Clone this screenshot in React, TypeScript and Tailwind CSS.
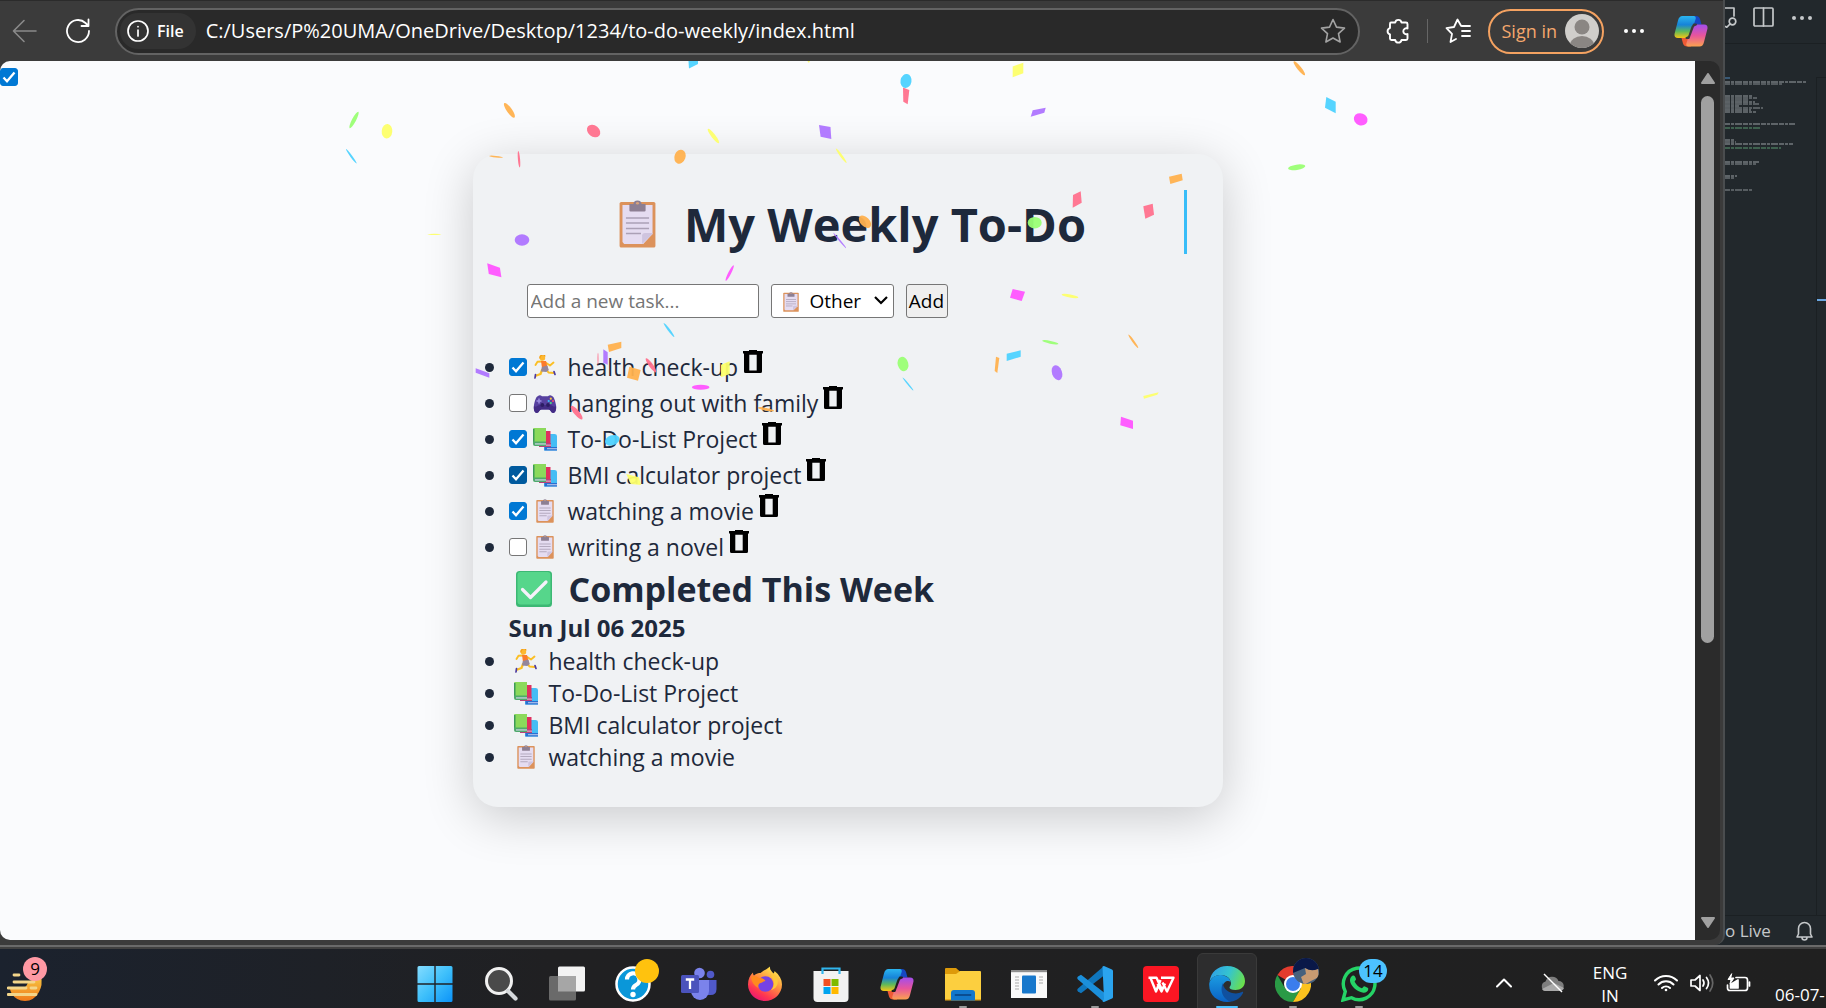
import React, { useState } from "react";

/* ---------- emoji style glyphs ---------- */

function Clipboard({ className }: { className: string }) {
  return (
    <svg viewBox="0 0 32 48" preserveAspectRatio="none" className={className} aria-hidden="true">
      <rect x="0.5" y="2" width="31" height="45.5" rx="1.5" fill="#dc925b" />
      <path d="M3 5h26v29l-8 10H4.5L3 42z" fill="#e5dcf1" />
      <path d="M20 44l9-10v-1h-6.500q-2.500 0-2.500 2.500z" fill="#cfc4df" />
      <path d="M9 4h3.500a3.500 3.500 0 0 1 7 0H23v6.500q0 1-1 1H10q-1 0-1-1z" fill="#8d7f93" />
      <circle cx="16" cy="3.200" r="1.300" fill="#d9a37b" />
      <path d="M6 18h20M6 23h20M6 28.500h20M6 33.500h13" stroke="#aba0b6" strokeWidth="1.600" />
    </svg>
  );
}

function Runner() {
  return (
    <svg viewBox="0 0 24 24" className="size-6" aria-hidden="true">
      <path d="M9 6.500 4.500 6.800 2.500 10" fill="none" stroke="#fbbf24" strokeWidth="1.900" strokeLinecap="round" strokeLinejoin="round" />
      <path d="M12.500 7.500 17 10.500 20.500 7.500" fill="none" stroke="#fbbf24" strokeWidth="1.900" strokeLinecap="round" strokeLinejoin="round" />
      <path d="M9 15 7.500 19 3.500 20.500" fill="none" stroke="#fbbf24" strokeWidth="2.200" strokeLinecap="round" strokeLinejoin="round" />
      <path d="M13 14 15.500 17.500 20.500 18" fill="none" stroke="#fbbf24" strokeWidth="2" strokeLinecap="round" strokeLinejoin="round" />
      <path d="M8 6h5l1.500 6-5.500 1z" fill="#fb7b2c" />
      <path d="M8.800 12l5.500-1.500 1.500 4.500-2.500 2L8 16.500z" fill="#94869c" />
      <circle cx="9.500" cy="3" r="2.700" fill="#fdb82f" />
      <path d="M7 3.500a2.800 2.800 0 0 1 5.200-2" fill="none" stroke="#f59e0b" strokeWidth="1.200" />
      <path d="M2.500 19.500 2 23M21 16.500 22 19.500" stroke="#4c3a9e" strokeWidth="1.700" strokeLinecap="round" />
    </svg>
  );
}

function Gamepad() {
  return (
    <svg viewBox="0 0 24 24" className="size-6" aria-hidden="true">
      <path d="M5 5q2-1.800 4 .2h6q2-2 4-.2c2 .6 3.200 5 4 9 .8 4-.3 8-2.800 8-2 0-2.700-3.500-4.700-3.500h-7C6.500 18.500 5.800 22 3.800 22 1.300 22 .2 18 1 14c.800-4 2-8.400 4-9z" fill="#56409f" />
      <path d="M1 15c2 2 3.500-1 6-1h10c2.500 0 4 3 6 1 .3 4-.8 7-2.800 7-2 0-2.700-3.500-4.700-3.500h-7C6.500 18.500 5.800 22 3.800 22 1.300 22 .6 18 1 15z" fill="#432c85" />
      <path d="M6 7.500v5M3.500 10h5" stroke="#9a8be0" strokeWidth="1.500" />
      <circle cx="9.300" cy="14" r="1.900" fill="#2c1d63" />
      <circle cx="15" cy="14" r="1.900" fill="#2c1d63" />
      <circle cx="17.800" cy="7.700" r="1.100" fill="#f8c33c" />
      <circle cx="20" cy="10" r="1.100" fill="#ef476f" />
      <circle cx="17.800" cy="12" r="1.100" fill="#4ade80" />
      <circle cx="15.700" cy="10" r="1.100" fill="#38bdf8" />
    </svg>
  );
}

function Books() {
  return (
    <svg viewBox="0 0 24 24" className="size-6" aria-hidden="true">
      <path d="M11 7h10.500q2.500 0 2.500 2v14.500H11z" fill="#45bdf5" />
      <path d="M11.500 20H24v3.500H11.500z" fill="#2a6fd0" />
      <path d="M14 21h10v1.300H14z" fill="#9fb8e8" />
      <path d="M6 4h11.500v16H6z" fill="#e0305f" />
      <path d="M6 16h12v4H6z" fill="#b8417a" />
      <path d="M8 17.500h10v1.300H8z" fill="#dba0c0" />
      <path d="M0 1.500Q0 1 1 1h12v15H0z" fill="#8bd95b" />
      <path d="M0 2h1.500v14H0z" fill="#3c9a58" />
      <path d="M0 14.500h13V19H2q-2 0-2-2z" fill="#4fa96b" />
      <path d="M2 16.300h11v1.300H2z" fill="#c5d3dd" />
    </svg>
  );
}

function Trash() {
  return (
    <svg viewBox="0 0 20 23" className="h-[23px] w-5" aria-hidden="true">
      <path fillRule="evenodd" d="M6 0h8v1h6v2.500h-1v18q0 1.500-1.500 1.500h-15Q1 23 1 21.500v-18H0V1h6zM6.300 4.800v15.700h7.400V4.800z" fill="#000" />
    </svg>
  );
}

const emoji = {
  run: <Runner />,
  game: <Gamepad />,
  books: <Books />,
  clip: (
    <span className="flex w-6 justify-center">
      <Clipboard className="h-6 w-[18px]" />
    </span>
  ),
};
type EmojiName = keyof typeof emoji;

/* ---------- confetti ---------- */

const C = { p: "#ff718d", y: "#fdff6a", b: "#4dd2ff", g: "#9aff74", o: "#ffb14e", v: "#ae74ff", m: "#ff54ff" };

const polys: [string, string][] = [
  [C.b, "688.5,61 698,61 698,64 689,68.5"],
  [C.p, "903,87.5 909.3,90 907.7,104.3 903.3,101.7"],
  [C.y, "1012.7,66.5 1023.3,62.7 1023.3,73.3 1012.7,77.3"],
  [C.v, "1032.7,110.3 1045.7,107.7 1044.3,112.7 1030.7,116.7"],
  [C.b, "1326.3,97 1335.7,101.7 1335.7,113.3 1325,107.7"],
  [C.o, "1169,176.7 1181.7,173.7 1182.7,180.3 1170.3,184"],
  [C.p, "1073,195 1080.7,191.3 1081.7,202.7 1072.7,207.7"],
  [C.p, "1143.3,206.3 1152.7,203.7 1154,214.7 1145.3,218.7"],
  [C.m, "1012.7,289 1025,291.7 1021.7,301 1010,297.7"],
  [C.o, "996,356.7 999.3,358 997.3,373 994.7,371"],
  [C.b, "1006.7,353.7 1020.7,350.3 1020.7,356.7 1006.7,361"],
  [C.y, "1143.3,396 1158.7,392.3 1157.3,394.7 1144,398.7"],
  [C.m, "1121,416.7 1133,420.7 1133,429 1120.3,425.3"],
  [C.v, "819,125 830.5,127 831.3,139 820.6,136.7"],
  [C.m, "487.2,263.3 499.9,267.7 501.4,277.3 488.8,274"],
  [C.o, "607.7,344.7 621.3,341.7 621.3,348 609,352"],
  [C.v, "603.3,349.3 607.7,352.3 607.7,364.7 603.3,362.7"],
  [C.o, "629.3,366.7 640.7,370 638,380.7 627,377.7"],
  [C.y, "721,364.7 729.7,361.3 729.7,374 721,377.3"],
  [C.v, "475.7,368.3 489.3,373.3 489.3,377.7 475.7,372.7"],
  [C.y, "626.3,474 639,477.3 641,485 630.7,484"],
];

const ovals: [string, number, number, number, number, number][] = [
  [C.y, 808.7, 61.5, 1, 1, 0],
  [C.b, 906, 81, 5.5, 7, 10],
  [C.o, 1299.3, 68.3, 8.8, 2, 51],
  [C.m, 1360.7, 119.3, 7, 6, 20],
  [C.g, 1296.7, 167.3, 8.7, 2.7, -8],
  [C.g, 1034.7, 222.7, 7, 5.8, 0],
  [C.y, 1070, 296, 8.5, 1.6, 10],
  [C.g, 1050.3, 342.3, 8.3, 1.4, 12],
  [C.o, 1133.3, 341.3, 8.3, 1.1, 54],
  [C.v, 1057, 372.7, 5, 7.7, -20],
  [C.g, 903, 364, 5.3, 7.3, -15],
  [C.b, 908, 384, 8.5, 0.7, 51],
  [C.g, 354, 120, 9.3, 2, -62],
  [C.y, 387, 131.3, 5.3, 7.3, 5],
  [C.b, 351.3, 156.3, 9, 1, 54],
  [C.o, 509.4, 110.3, 8.8, 2.6, 55],
  [C.p, 593.6, 131, 7.3, 5.6, 40],
  [C.y, 713.4, 136, 9, 2, 52],
  [C.y, 841.2, 155.7, 9, 1.2, 54],
  [C.o, 680, 156.7, 5.5, 7.2, 20],
  [C.o, 496, 156.7, 7, 0.8, 6],
  [C.p, 519, 159.3, 1.1, 8.3, -5],
  [C.y, 434.4, 234.3, 7, 0.6, 0],
  [C.v, 522, 240, 7.3, 5.8, 0],
  [C.o, 865, 221.7, 7.5, 4.5, 45],
  [C.v, 839.7, 240.5, 10, 0.7, 50],
  [C.m, 729.7, 273, 8.8, 1.4, -63],
  [C.b, 669, 330, 8.8, 1.1, 53],
  [C.p, 598, 358.7, 0.5, 6, 0],
  [C.p, 651, 365.3, 8.7, 2, 54],
  [C.m, 700.7, 387.3, 8.8, 2.5, 0],
  [C.p, 576.7, 412.7, 8.7, 2.6, 50],
  [C.o, 766, 409.3, 8.3, 1.4, 12],
  [C.b, 612.3, 440.3, 7.5, 5, -20],
];

function Confetti() {
  return (
    <svg className="pointer-events-none absolute inset-0 size-full" aria-hidden="true">
      <g transform="translate(0 -61)">
        {polys.map(([c, pts], i) => (
          <polygon key={i} fill={c} fillOpacity="0.95" points={pts} />
        ))}
        {ovals.map(([c, x, y, rx, ry, r], i) => (
          <ellipse key={i} fill={c} fillOpacity="0.95" rx={rx} ry={ry} transform={`translate(${x} ${y}) rotate(${r})`} />
        ))}
      </g>
    </svg>
  );
}

/* ---------- to-do page ---------- */

function Check({ label, initial, dark }: { label: string; initial: boolean; dark?: boolean }) {
  const [on, setOn] = useState(initial);
  return (
    <span className="grid size-[18px] shrink-0">
      <input
        type="checkbox"
        aria-label={label}
        checked={on}
        onChange={() => setOn(!on)}
        className={
          "col-start-1 row-start-1 size-[18px] appearance-none rounded-[3px] border border-[#767676] bg-white " +
          (dark ? "checked:border-[#005a9e] checked:bg-[#005a9e]" : "checked:border-[#0078d4] checked:bg-[#0078d4]")
        }
      />
      {on && (
        <svg viewBox="0 0 18 18" className="pointer-events-none col-start-1 row-start-1 size-[18px]" aria-hidden="true">
          <path d="M3.500 9.500l3.500 3.700 7.500-8.700" fill="none" stroke="#fff" strokeWidth="2.300" />
        </svg>
      )}
    </span>
  );
}

const Bullet = () => <span className="mr-[15px] size-[9px] shrink-0 rounded-full bg-[#1e293b]" />;

const tasks: { text: string; icon: EmojiName; done: boolean; dark?: boolean }[] = [
  { text: "health check-up", icon: "run", done: true },
  { text: "hanging out with family", icon: "game", done: false },
  { text: "To-Do-List Project", icon: "books", done: true },
  { text: "BMI calculator project", icon: "books", done: true, dark: true },
  { text: "watching a movie", icon: "clip", done: true },
  { text: "writing a novel", icon: "clip", done: false },
];

const completed: { text: string; icon: EmojiName }[] = [
  { text: "health check-up", icon: "run" },
  { text: "To-Do-List Project", icon: "books" },
  { text: "BMI calculator project", icon: "books" },
  { text: "watching a movie", icon: "clip" },
];

function TodoPage() {
  return (
    <main className="relative min-w-0 flex-1 overflow-hidden rounded-l-[10px] bg-[#fafbfd] pt-[7px] text-[#1e293b]">
      <Check label="Dark mode" initial={true} />
      <section className="mx-auto mt-[68px] w-[750px] rounded-[25px] bg-[#f0f2f4] px-9 pt-9 pb-[34px] shadow-[0_10px_50px_rgba(0,0,0,0.2)]">
        <h1 className="flex h-16 items-center justify-center gap-7 border-r-[3px] border-[#38bdf8] pt-1 pr-24 pl-[109px] text-[47px] leading-none font-bold whitespace-nowrap">
          <Clipboard className="h-12 w-[37px] shrink-0" />
          My Weekly To-Do
        </h1>
        <form className="mt-[30px] ml-[18px] flex h-[34px] gap-3 text-[19px] text-black" onSubmit={(e) => e.preventDefault()}>
          <input
            type="text"
            aria-label="New task"
            placeholder="Add a new task..."
            className="w-[232px] rounded-[3px] border border-[#767676] bg-white px-[3px] placeholder:text-[#757575]"
          />
          <span className="relative flex w-[123px]">
            <select aria-label="Category" className="w-full appearance-none rounded-[3px] border border-[#767676] bg-white pl-[38px]">
              <option>Other</option>
            </select>
            <Clipboard className="pointer-events-none absolute top-2 left-3 h-5 w-4" />
            <svg viewBox="0 0 14 9" className="pointer-events-none absolute top-3 right-[6px] h-[9px] w-[14px]" aria-hidden="true">
              <path d="M1 1l6 6 6-6" fill="none" stroke="#000" strokeWidth="2.200" />
            </svg>
          </span>
          <button type="submit" className="w-[42px] rounded-[3px] border border-[#767676] bg-[#efefef]">
            Add
          </button>
        </form>

        <ul className="mt-[31px] -ml-6 text-[23px] leading-9">
          {tasks.map((t) => (
            <li key={t.text} className="flex h-9 items-center whitespace-nowrap">
              <Bullet />
              <Check label={t.text} initial={t.done} dark={t.dark} />
              <span className="mr-[11px] ml-[6px]">{emoji[t.icon]}</span>
              <span>{t.text}</span>
              <button type="button" aria-label={"Delete " + t.text} className="mb-3 ml-[5px]">
                <Trash />
              </button>
            </li>
          ))}
        </ul>

        <h2 className="flex h-12 items-center gap-[17px] pl-[7px] text-[34px] leading-none font-bold whitespace-nowrap">
          <svg viewBox="0 0 36 36" className="size-9 shrink-0" aria-hidden="true">
            <rect width="36" height="36" rx="3.500" fill="#3cb874" />
            <rect x="1.500" y="1" width="33" height="32.500" rx="3" fill="#56d68b" />
            <path d="M6.500 18.500l8 8L30 11" fill="none" stroke="#f6f1fb" strokeWidth="3.200" strokeLinecap="round" strokeLinejoin="round" />
          </svg>
          Completed This Week
        </h2>
        <h3 className="text-[24px] leading-[30px] font-bold">Sun Jul 06 2025</h3>
        <ul className="mt-[2px] -ml-6 text-[23px] leading-8">
          {completed.map((t) => (
            <li key={t.text} className="flex h-8 items-center whitespace-nowrap">
              <Bullet />
              <span className="mr-[11px] ml-[5px]">{emoji[t.icon]}</span>
              {t.text}
            </li>
          ))}
        </ul>
      </section>
      <Confetti />
    </main>
  );
}

/* ---------- browser chrome ---------- */

const iconBase = { fill: "none", stroke: "currentColor", strokeLinecap: "round", strokeLinejoin: "round" } as const;

function CopilotIcon({ className, id, gap }: { className: string; id: string; gap: string }) {
  return (
    <svg viewBox="0 0 34 31" className={className} aria-hidden="true">
      <defs>
        <linearGradient id={id + "a"} x1="0" y1="0" x2="0" y2="1">
          <stop offset="0" stopColor="#2bb5f0" />
          <stop offset="0.4" stopColor="#1683d8" />
          <stop offset="0.7" stopColor="#5fb85a" />
          <stop offset="1" stopColor="#f6c614" />
        </linearGradient>
        <linearGradient id={id + "b"} x1="0" y1="0" x2="0" y2="1">
          <stop offset="0" stopColor="#a24dee" />
          <stop offset="0.5" stopColor="#e8559c" />
          <stop offset="1" stopColor="#fba24f" />
        </linearGradient>
      </defs>
      <path d="M17 0h5q3 0 4 3l1.500 5.500H23q-3 0-4 3z" fill="#1547c4" />
      <path d="M17 30.500h-4q-3 0-4-3L7.500 22H12q3 0 4-3z" fill="#ee5a35" />
      <path d="M8.500 0H20q2.500.5 1.500 3.500l-5 15Q15.500 22 12 22H4Q0 22 .5 18L4 4.500Q5 0 8.500 0z" fill={`url(#${id}a)`} />
      <path d="M25.500 30.500H14q-2.500-.5-1.500-3.500l5-15Q18.500 8.500 22 8.500h8q4 0 3.500 4L30 26q-1 4.500-4.500 4.500z" fill={`url(#${id}b)`} />
      <path d="M19.800 8.500H22q-3 .5-4 3.500l-3.300 10H12.500q2.500-.5 3.500-3.500z" fill={gap} stroke={gap} strokeWidth="2" strokeLinejoin="round" />
    </svg>
  );
}

function Toolbar() {
  return (
    <header className="flex h-[61px] shrink-0 items-center border-t border-[#2b2b2b] bg-[#3b3b3b] pr-[15px] pl-3 text-white">
      <button type="button" aria-label="Back" className="text-[#8a8a8a]">
        <svg viewBox="0 0 25 24" className="h-6 w-[25px]" {...iconBase} strokeWidth="1.600">
          <path d="M24 12H1.500M12 1.500L1.500 12 12 22.500" />
        </svg>
      </button>
      <button type="button" aria-label="Refresh" className="ml-7">
        <svg viewBox="0 0 26 26" className="size-[26px]" {...iconBase} strokeWidth="1.800">
          <path d="M24 13A11 11 0 1 1 20.500 5L23 7.500M23.500 1.500v6.500h-7" />
        </svg>
      </button>
      <div className="ml-6 flex h-[47px] min-w-0 flex-1 items-center rounded-full border-2 border-[#636363] bg-[#292929] pr-3 pl-[3px]">
        <button type="button" className="flex h-9 shrink-0 items-center gap-2 rounded-full bg-[#333333] pr-3 pl-[7px] text-[16px] font-semibold">
          <svg viewBox="0 0 22 22" className="size-[22px]" {...iconBase} strokeWidth="1.700">
            <circle cx="11" cy="11" r="10" />
            <path d="M11 10v6M11 6.500v.2" />
          </svg>
          File
        </button>
        <input
          aria-label="Address"
          readOnly
          value="C:/Users/P%20UMA/OneDrive/Desktop/1234/to-do-weekly/index.html"
          className="ml-[10px] min-w-0 flex-1 bg-transparent text-[20px] text-white outline-none"
        />
        <button type="button" aria-label="Add to favorites" className="text-[#a3a3a3]">
          <svg viewBox="0 0 26 26" className="size-[26px]" {...iconBase} strokeWidth="1.600">
            <path d="M13 1.500l3.500 7.600 8 1-6 5.600 1.600 8.300L13 20l-7.100 4 1.600-8.300-6-5.600 8-1z" />
          </svg>
        </button>
      </div>
      <button type="button" aria-label="Extensions" className="ml-[26px]">
        <svg viewBox="0 0 24 26" className="h-[26px] w-6" {...iconBase} strokeWidth="1.900">
          <path d="M5 4.500h4.200a3.200 3.200 0 0 1 6.300 0H20q1.500 0 1.500 1.500v4.500a3 3 0 1 0 0 5.500v4.500q0 1.500-1.500 1.500h-4.500a3.200 3.200 0 0 1-6.300 0H5.500Q4 22 4 20.500V16.300a3.200 3.200 0 0 1 0-6.200V6q0-1.500 1-1.500z" />
        </svg>
      </button>
      <span className="ml-[17px] h-6 w-px bg-[#666]" />
      <button type="button" aria-label="Favorites" className="ml-[17px]">
        <svg viewBox="0 0 26 26" className="size-[26px]" {...iconBase} strokeWidth="1.800">
          <path d="M17 8l-1-.2-3.500-6.300L9 9l-7.500 1.200 5.500 5.600L5.500 24l5.500-3M17 8h8M17 13h8M17 18h8" />
        </svg>
      </button>
      <button type="button" className="ml-[17px] flex h-[45px] items-center gap-2 rounded-full border-2 border-[#f4a261] pr-[3px] pl-3 text-[18px] whitespace-nowrap text-[#f4a76d]">
        Sign in
        <svg viewBox="0 0 34 34" className="size-[34px]" aria-hidden="true">
          <defs>
            <clipPath id="avatar">
              <circle cx="17" cy="17" r="17" />
            </clipPath>
          </defs>
          <g clipPath="url(#avatar)">
            <rect width="34" height="34" fill="#d0cecb" />
            <circle cx="17" cy="13" r="7.500" fill="#8a8683" />
            <ellipse cx="17" cy="31" rx="12" ry="9" fill="#8a8683" />
          </g>
        </svg>
      </button>
      <button type="button" aria-label="More" className="mr-[30px] ml-5 flex gap-1">
        <span className="size-1 rounded-full bg-white" />
        <span className="size-1 rounded-full bg-white" />
        <span className="size-1 rounded-full bg-white" />
      </button>
      <button type="button" aria-label="Copilot">
        <CopilotIcon id="top" gap="#3b3b3b" className="h-[31px] w-[34px]" />
      </button>
    </header>
  );
}

function Scrollbar() {
  return (
    <div className="flex w-[25px] shrink-0 flex-col items-center rounded-r-[10px] bg-[#2b2b2b] py-3">
      <svg viewBox="0 0 14 11" className="h-[11px] w-[14px]" aria-hidden="true">
        <path d="M7 1l6 9H1z" fill="#a0a0a0" stroke="#a0a0a0" strokeWidth="2" strokeLinejoin="round" />
      </svg>
      <div className="mt-3 h-[64%] w-[13px] rounded-full bg-[#a0a0a0]" />
      <svg viewBox="0 0 14 11" className="mt-auto h-[11px] w-[14px]" aria-hidden="true">
        <path d="M7 10L1 1h12z" fill="#a0a0a0" stroke="#a0a0a0" strokeWidth="2" strokeLinejoin="round" />
      </svg>
    </div>
  );
}

/* ---------- editor strip behind the browser ---------- */

const mini: [number, number, string][] = [
  [78, 5, "#4b7ba8"], [82, 82, "#9aa0a4"], [84, 57, "#868c90"],
  [96, 28, "#969ca0"], [98, 32, "#8b9195"], [100, 24, "#8b9195"], [102, 30, "#969ca0"], [104, 34, "#8b9195"], [106, 14, "#969ca0"], [108, 38, "#8b9195"], [110, 26, "#969ca0"], [112, 31, "#969ca0"],
  [124, 70, "#9aa0a4"], [128, 36, "#5d9a72"],
  [140, 10, "#969ca0"], [142, 11, "#8b9195"], [144, 68, "#9aa0a4"], [148, 56, "#5d9a72"],
  [162, 34, "#9aa0a4"], [164, 31, "#8b9195"],
  [176, 12, "#9aa0a4"], [178, 10, "#8b9195"], [190, 27, "#8b9195"],
];

function EditorStrip() {
  return (
    <aside className="flex w-[101px] shrink-0 flex-col bg-[#22282c] text-[#c5c8ca]">
      <div className="flex h-11 shrink-0 items-start border-b border-[#1b2023] pt-[7px]">
        <svg viewBox="0 0 12 21" className="h-[21px] w-3" {...iconBase} strokeWidth="1.700">
          <path d="M0 1h9v8M0 19.500h1" />
          <circle cx="7.500" cy="14.500" r="3.300" />
          <path d="M5 17l-3.500 3.500" />
        </svg>
        <svg viewBox="0 0 21 20" className="ml-4 h-5 w-[21px]" {...iconBase} strokeWidth="1.700">
          <rect x="1" y="1" width="19" height="18" rx="1" />
          <path d="M10.500 1v18" />
        </svg>
        <div className="mt-[9px] ml-[18px] flex gap-1">
          <span className="size-1 rounded-full bg-[#c5c8ca]" />
          <span className="size-1 rounded-full bg-[#c5c8ca]" />
          <span className="size-1 rounded-full bg-[#c5c8ca]" />
        </div>
      </div>
      <div className="flex min-h-0 flex-1">
        <svg className="h-full w-[91px]" aria-hidden="true">
          {mini.map(([y, w, c]) => (
            <path key={y} d={`M0 ${y - 44}h${w}`} stroke={c} strokeWidth="1.200" strokeDasharray="5 1 3 1 7 1" />
          ))}
        </svg>
        <div className="mt-[33px] flex-1 border-t border-l border-[#1b2023] pt-[221px]">
          <div className="h-[2px] bg-[#6aa6e0]" />
        </div>
      </div>
      <div className="flex h-[30px] shrink-0 items-center border-t border-[#1b2023] text-[17px]">
        <span>o Live</span>
        <svg viewBox="0 0 17 20" className="ml-[25px] h-5 w-[17px]" {...iconBase} strokeWidth="1.600">
          <path d="M1 16l1.500-3V7.500a6 6 0 0 1 12 0V13l1.500 3zM6 16.500a2.500 2.500 0 0 0 5 0" />
        </svg>
      </div>
    </aside>
  );
}

/* ---------- taskbar ---------- */

function StartIcon() {
  return (
    <svg viewBox="0 0 36 36" className="size-9">
      <defs>
        <linearGradient id="win" x1="0" y1="0" x2="1" y2="1">
          <stop offset="0" stopColor="#84dcff" />
          <stop offset="0.5" stopColor="#3fc0fb" />
          <stop offset="1" stopColor="#0b93f8" />
        </linearGradient>
      </defs>
      <path d="M2 0h15.300v17.300H.500V1.500Q.500 0 2 0zM18.700 0H34q1.500 0 1.500 1.500v15.800H18.700zM.500 18.700h16.800V36H2q-1.500 0-1.500-1.500zM18.700 18.700h16.800v15.800q0 1.500-1.500 1.500H18.700z" fill="url(#win)" />
    </svg>
  );
}

function SearchIcon() {
  return (
    <svg viewBox="0 0 36 36" className="size-9">
      <circle cx="16" cy="15" r="12.500" fill="#4a4a4a" stroke="#f1f1f1" strokeWidth="3" />
      <path d="M25 25l7.500 7.500" stroke="#d6d9dc" strokeWidth="4.200" strokeLinecap="round" />
    </svg>
  );
}

function TaskViewIcon() {
  return (
    <svg viewBox="0 0 36 36" className="size-9">
      <rect x="9" y="0.500" width="27" height="25" rx="1.500" fill="#f3f3f3" />
      <rect x="0" y="10" width="27" height="24.500" rx="1.500" fill="#6a6a6a" />
      <rect x="9" y="10" width="18" height="15.500" fill="#a6a6a6" />
    </svg>
  );
}

function HelpIcon() {
  return (
    <span className="relative block">
      <svg viewBox="0 0 36 36" className="size-9">
        <circle cx="18" cy="18" r="16.500" fill="#0a97d9" stroke="#fff" strokeWidth="2.500" />
        <path d="M12 13.500a6.200 6.200 0 1 1 9 5.500c-2 1.200-3 2-3 4.500" fill="none" stroke="#fff" strokeWidth="4.200" />
        <circle cx="18" cy="28.500" r="2.700" fill="#fff" />
      </svg>
      <span className="absolute -top-[7px] left-5 size-6 rounded-full bg-[#ffc20e]" />
    </span>
  );
}

function TeamsIcon() {
  return (
    <svg viewBox="0 0 36 36" className="size-9">
      <circle cx="18.500" cy="7" r="5.300" fill="#7b83eb" />
      <circle cx="29.500" cy="8.500" r="3.800" fill="#5059c9" />
      <path d="M24 14h11.500v9q0 6-6 6H24z" fill="#5059c9" />
      <path d="M10 14h18v11a9 9 0 0 1-18 0z" fill="#7b83eb" />
      <rect x="0" y="9" width="18" height="18" rx="1.500" fill="#4b53bc" />
      <path d="M4.800 13.500h8.400M9 13.500V23" stroke="#fff" strokeWidth="2.300" />
    </svg>
  );
}

function FirefoxIcon() {
  return (
    <svg viewBox="0 0 36 36" className="size-9">
      <defs>
        <linearGradient id="ffx" x1="0.8" y1="0" x2="0.2" y2="1">
          <stop offset="0" stopColor="#fff44f" />
          <stop offset="0.4" stopColor="#ff9640" />
          <stop offset="0.75" stopColor="#ff3750" />
          <stop offset="1" stopColor="#e4107a" />
        </linearGradient>
      </defs>
      <path d="M23 .5c-.5 3 1.500 4.500 3.500 7 .800-.8 1-2 1-2.500C32.500 9 35 13.500 35 18.500a17 16.500 0 0 1-34 0C1 13 3 9 6 6.500c0 1.500.3 2.300 1 3C9 7.500 12 7 13.500 7 16 4.500 20 3.500 23 .5z" fill="url(#ffx)" />
      <circle cx="18.500" cy="18" r="7.800" fill="#7542e5" />
      <path d="M4 11c3-2 6-1 8 1 2.500-.5 5 .5 6.500 3-2 .2-3 1.500-5 2-2 .800-2.500 2.500-2 5-4-2-7-6-7.500-11z" fill="#ff8a1e" />
      <path d="M24 10.500c4 3 4 10 0 13.500 5-1 8-6 6.500-11-1-3-3.500-5-6-6 .5 1.500 0 2.500-.5 3.500z" fill="#ffc83a" />
    </svg>
  );
}

function StoreIcon() {
  return (
    <svg viewBox="0 0 36 36" className="size-9">
      <path d="M.5 5h35v27q0 4-4 4h-27q-4 0-4-4z" fill="#f2f2f2" />
      <path d="M9.500 8V2.500h17V8" fill="none" stroke="#30b6ee" strokeWidth="2.200" />
      <rect x="10.500" y="13" width="7" height="7" fill="#f25022" />
      <rect x="18.500" y="13" width="7" height="7" fill="#7fba00" />
      <rect x="10.500" y="21" width="7" height="7" fill="#00a4ef" />
      <rect x="18.500" y="21" width="7" height="7" fill="#ffb900" />
    </svg>
  );
}

function FolderIcon() {
  return (
    <svg viewBox="0 0 36 36" className="size-9">
      <path d="M0 3q0-1 1-1h10l4 3.500L12 8H0z" fill="#dd9a0a" />
      <path d="M0 8h11l4-3h20q1 0 1 1v28H0z" fill="#fccf3f" />
      <path d="M0 33h36v1.500H0z" fill="#e8a91c" />
      <path d="M6 34.500V27q0-3 3-3h18q3 0 3 3v7.500z" fill="#1277cc" />
      <path d="M10.500 29h15" stroke="#0a4d91" strokeWidth="1.800" strokeLinecap="round" />
    </svg>
  );
}

function WindowIcon() {
  return (
    <svg viewBox="0 0 36 36" className="size-9">
      <rect x="0" y="4" width="36" height="28" fill="#fafafa" />
      <rect x="0" y="4" width="36" height="2.200" fill="#8f8f8f" />
      <path d="M4 11h4M4 14h4M4 17h4M4 20h4M4 23h4M28 11h4M28 14h4M28 17h4" stroke="#d2d2d2" strokeWidth="1.800" />
      <rect x="11" y="9.500" width="14" height="18" rx="1" fill="#1878cc" />
    </svg>
  );
}

function CodeIcon() {
  return (
    <svg viewBox="0 0 36 36" className="size-9">
      <path d="M27 0v9.500L4 27.300 1 25.500q-1.500-1.500 0-3z" fill="#0f76bd" />
      <path d="M27 36v-9.500L4 8.700 1 10.500q-1.500 1.500 0 3z" fill="#1b8fdb" />
      <path d="M25.500.5 27 0l8 3.500q1 .500 1 1.500v26q0 1-1 1.500L27 36l-1.500-.5L27 33z" fill="#2ba4ee" />
    </svg>
  );
}

function WpsIcon() {
  return (
    <svg viewBox="0 0 36 36" className="size-9">
      <rect width="36" height="36" rx="4" fill="#fb1623" />
      <path d="M5.500 11.800H13.500l5 11M7.500 12l5.500 13.500L17.500 14M18 11.800h12.500L24 25.500l-4.500-9M14.500 18l4 7.500 3.500-8" fill="none" stroke="#fff" strokeWidth="2.400" strokeLinejoin="round" />
    </svg>
  );
}

function EdgeIcon() {
  return (
    <svg viewBox="0 0 36 36" className="size-9">
      <defs>
        <linearGradient id="edgeTop" x1="0" y1="0.3" x2="1" y2="0.6">
          <stop offset="0" stopColor="#2f9fe8" />
          <stop offset="0.5" stopColor="#35c4cf" />
          <stop offset="1" stopColor="#6be04a" />
        </linearGradient>
        <linearGradient id="edgeLow" x1="0" y1="0" x2="0" y2="1">
          <stop offset="0" stopColor="#1b9de2" />
          <stop offset="1" stopColor="#0a61c4" />
        </linearGradient>
      </defs>
      <path d="M.5 16C1.500 6 9 0 18 0c11 0 18 7.500 18 15 0 6-4.500 9-9.500 9-4 0-6-1-6-2.500 0-1 1.500-1.500 1.500-4C22 13 18 9 12 9 6 9 2 12 .5 16z" fill="url(#edgeTop)" />
      <path d="M.300 17C2 11.500 7 8.500 12 9c6 .5 9.500 4 9.500 7-2-2-7-1-8 5-.800 6 3 13 9 14.500C11 38-1 30 .300 17z" fill="url(#edgeLow)" />
      <path d="M14 17c-4 8 1 18 9 18.500 5-1 9-4.500 11-8.500.5-1-.3-1.500-1-1-6 3-15 1-18-5-.800-1.500-1-3-1-4z" fill="#10509f" />
    </svg>
  );
}

function ChromeIcon() {
  return (
    <span className="relative block">
      <svg viewBox="0 0 36 36" className="size-9">
        <path d="M18 18L2.400 9A18 18 0 0 1 33.600 9H18z" fill="#e33b2e" />
        <path d="M18 18l7.800 4.500L18 36A18 18 0 0 1 2.400 9l7.800 13.500z" fill="#2a9a46" />
        <path d="M33.600 9A18 18 0 0 1 18 36l7.800-13.500V9z" fill="#fcc31e" />
        <circle cx="18" cy="18" r="9" fill="#fff" />
        <circle cx="18" cy="18" r="7" fill="#3b7ded" />
      </svg>
      <svg viewBox="0 0 26 26" className="absolute -top-2 left-[18px] size-[26px]">
        <defs>
          <clipPath id="profile">
            <circle cx="13" cy="13" r="13" />
          </clipPath>
        </defs>
        <g clipPath="url(#profile)">
          <rect width="26" height="26" fill="#46617d" />
          <path d="M0 0h26v11q-8 4-14-1L0 15z" fill="#0a1848" />
          <path d="M12 10q6 4 13 1l1 8-8 4-7 4-3-8 5-3z" fill="#c89b72" />
        </g>
      </svg>
    </span>
  );
}

function WhatsAppIcon() {
  return (
    <span className="relative block">
      <svg viewBox="0 0 36 36" className="size-9">
        <path d="M2 34l2.300-8.500A15.800 15.800 0 1 1 10.500 31.700z" fill="none" stroke="#25d366" strokeWidth="3.400" />
        <path d="M12.500 9.500c1 0 1.500.5 2.500 3.500.3 1-1.500 2-1.300 2.700 1.300 3 4 5.300 7 6.500.8 0 1.800-2 2.600-2 3.700 1.500 4.200 2 4 2.800-.3 3-3 4-5 3.700C15 25.500 10 20 9 15c-.2-3 1.500-5.500 3.500-5.500z" fill="#25d366" />
      </svg>
      <span className="absolute -top-[7px] left-[18px] flex h-6 w-7 items-center justify-center rounded-full bg-[#4cc2ff] text-[17px] text-black">14</span>
    </span>
  );
}

const apps: { name: string; icon: React.ReactNode; state?: "open" | "active" }[] = [
  { name: "Start", icon: <StartIcon /> },
  { name: "Search", icon: <SearchIcon /> },
  { name: "Task view", icon: <TaskViewIcon /> },
  { name: "Get Help", icon: <HelpIcon /> },
  { name: "Teams", icon: <TeamsIcon /> },
  { name: "Firefox", icon: <FirefoxIcon /> },
  { name: "Store", icon: <StoreIcon /> },
  { name: "Copilot", icon: <CopilotIcon id="bar" gap="#202020" className="h-[31px] w-[34px]" /> },
  { name: "Files", icon: <FolderIcon />, state: "open" },
  { name: "Window", icon: <WindowIcon /> },
  { name: "Code", icon: <CodeIcon />, state: "open" },
  { name: "Office", icon: <WpsIcon /> },
  { name: "Edge", icon: <EdgeIcon />, state: "active" },
  { name: "Chrome", icon: <ChromeIcon />, state: "open" },
  { name: "WhatsApp", icon: <WhatsAppIcon />, state: "open" },
];

function Taskbar() {
  return (
    <footer className="flex h-[59px] shrink-0 items-stretch overflow-hidden bg-linear-to-r from-[#1b222e] via-[#202022] via-30% to-[#202020] text-white">
      <button type="button" aria-label="Weather" className="relative ml-[7px] h-[59px] w-[42px] shrink-0">
        <svg viewBox="0 0 36 34" className="mt-3 h-[34px] w-9" aria-hidden="true">
          <defs>
            <linearGradient id="sun" x1="0" y1="0" x2="0" y2="1">
              <stop offset="0" stopColor="#f7c844" />
              <stop offset="1" stopColor="#f07a1a" />
            </linearGradient>
          </defs>
          <path d="M34 8q2 9-2 16-5 9-14 9-9-.5-13-7-2-3-2-6h13q4-1 5-6z" fill="url(#sun)" />
          <path d="M7 7h5M7 14h20M1 20h18M24 20h5M1 26.500h28" stroke="#f3d58a" strokeWidth="2.800" strokeLinecap="round" />
        </svg>
        <span className="absolute top-2 left-4 flex size-6 items-center justify-center rounded-full bg-[#ff99a4] text-[17px] text-black">9</span>
      </button>
      <nav aria-label="Apps" className="ml-[353px] flex shrink-0">
        {apps.map((a) => (
          <button
            key={a.name}
            type="button"
            aria-label={a.name}
            className={
              "relative mt-1 flex h-[62px] w-[66px] items-center justify-center " +
              (a.state === "active" ? "before:absolute before:inset-x-[3px] before:inset-y-0 before:rounded-md before:border before:border-[#3a3a3a] before:bg-[#2d2d2e]" : "")
            }
          >
            <span className="relative">{a.icon}</span>
            {a.state === "open" && <span className="absolute top-[53px] h-[2px] w-2 rounded-full bg-[#9a9a9a]" />}
            {a.state === "active" && <span className="absolute top-[53px] h-[2px] w-[22px] rounded-full bg-[#4cc2ff]" />}
          </button>
        ))}
      </nav>
      <div className="ml-auto flex shrink-0 items-center pt-2 text-[17px]">
        <button type="button" aria-label="Hidden icons">
          <svg viewBox="0 0 16 10" className="h-[10px] w-4" {...iconBase} strokeWidth="2">
            <path d="M1 8.500l7-7 7 7" />
          </svg>
        </button>
        <svg viewBox="0 0 24 20" className="ml-7 h-5 w-6" aria-hidden="true">
          <path d="M5 18a5 5 0 0 1 .5-9.500A7 7 0 0 1 18.500 8 5 5 0 0 1 19 18z" fill="#7e7e7e" />
          <path d="M2 16l12-6 10 5q-1 3-5 3H5q-2 0-3-2z" fill="#a9a9a9" />
          <path d="M4 1l18 18" stroke="#fff" strokeWidth="1.500" />
        </svg>
        <button type="button" className="mt-[2px] ml-7 w-[36px] text-center leading-[23px]">
          ENG
          <br />
          IN
        </button>
        <svg viewBox="0 0 24 18" className="ml-[26px] h-[18px] w-6" {...iconBase} strokeWidth="2">
          <path d="M1 6.500a15.500 15.500 0 0 1 22 0M4.500 10.500a10.500 10.500 0 0 1 15 0M8 14a6 6 0 0 1 8 0" />
          <circle cx="12" cy="16" r="1.300" fill="currentColor" stroke="none" />
        </svg>
        <svg viewBox="0 0 24 20" className="ml-3 h-5 w-6" {...iconBase} strokeWidth="1.700">
          <path d="M1 7h4l5-4.500v15L5 13H1zM13 7q2 3 0 6M16.500 4.500q4 5.500 0 11" />
          <path d="M20 2q5.500 8 0 16" stroke="#666" />
        </svg>
        <svg viewBox="0 0 25 20" className="ml-3 h-5 w-[25px]" {...iconBase} strokeWidth="1.700">
          <path d="M10 4.500h9q2.500 0 2.500 2.500v8q0 2.500-2.500 2.500H4Q1.500 17.500 1.500 15v-3M23.500 9v4" />
          <path d="M4.500 15v-3.500L12 7v8z" fill="currentColor" />
          <path d="M5.500 1L2 6.500h3L4 11l4-6H5z" fill="currentColor" strokeWidth="1" />
        </svg>
        <span className="ml-6 h-[26px] w-[51px] self-end overflow-hidden whitespace-nowrap">06-07-</span>
      </div>
    </footer>
  );
}

export default function App() {
  return (
    <div className="flex h-screen flex-col overflow-hidden bg-[#22282c] font-['Open_Sans','Noto_Sans',sans-serif]">
      <div className="flex min-h-0 flex-1">
        <div className="flex min-w-0 flex-1 flex-col rounded-br-[10px] border-r-2 border-[#4a4d4f] bg-[#3b3b3b]">
          <Toolbar />
          <div className="flex min-h-0 flex-1 pr-[3px] pb-[5px]">
            <TodoPage />
            <Scrollbar />
          </div>
        </div>
        <EditorStrip />
      </div>
      <div className="h-1 shrink-0 border-t-2 border-[#6a6a6a] bg-[#404040]" />
      <Taskbar />
    </div>
  );
}
